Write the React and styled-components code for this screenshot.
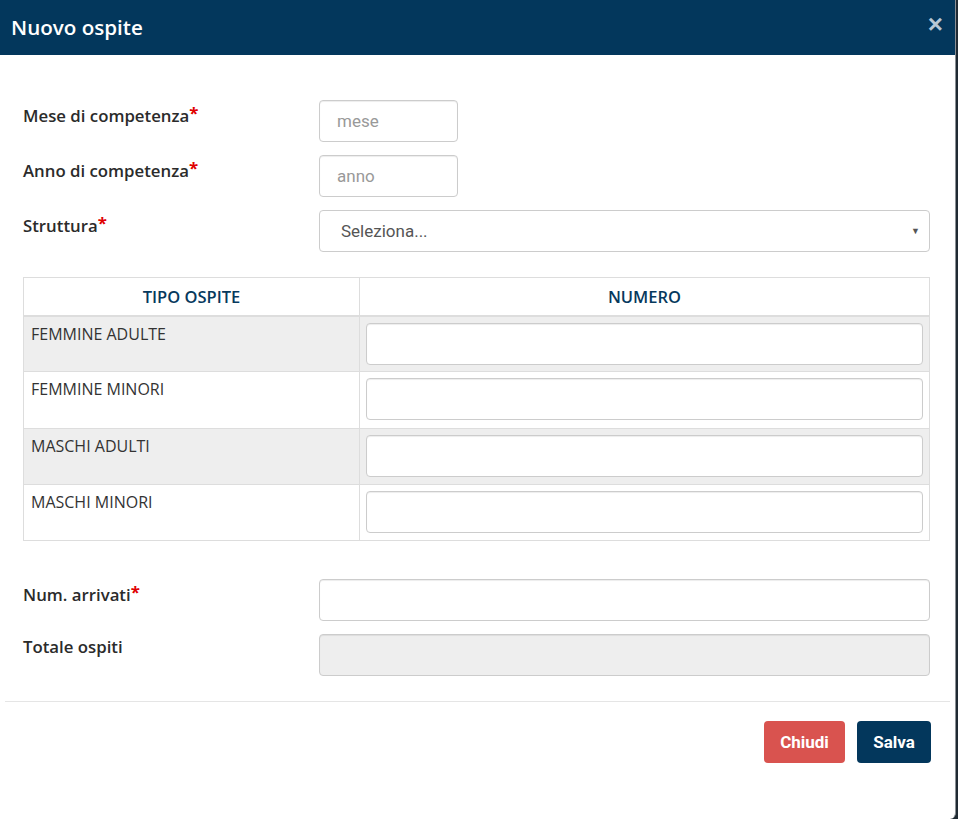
import React from 'react'
import styled, { createGlobalStyle } from 'styled-components'

const GlobalStyle = createGlobalStyle`
  html, body {
    margin: 0;
    padding: 0;
    background: #1f2a33;
  }
  * {
    box-sizing: border-box;
  }
`

const guestTypes = ['FEMMINE ADULTE', 'FEMMINE MINORI', 'MASCHI ADULTI', 'MASCHI MINORI']

const App = () => {
  return (
    <>
      <GlobalStyle />
      <Modal>
        <Header>
          <Title>Nuovo ospite</Title>
          <CloseButton aria-label="chiudi">×</CloseButton>
        </Header>
        <Body>
          <FormRow>
            <Label>Mese di competenza<Star>*</Star></Label>
            <Input $small placeholder="mese" />
          </FormRow>
          <FormRow>
            <Label>Anno di competenza<Star>*</Star></Label>
            <Input $small placeholder="anno" />
          </FormRow>
          <FormRow>
            <Label>Struttura<Star>*</Star></Label>
            <SelectBox>
              <span>Seleziona...</span>
              <Caret>▼</Caret>
            </SelectBox>
          </FormRow>

          <Table>
            <thead>
              <tr>
                <Th $left>TIPO OSPITE</Th>
                <Th>NUMERO</Th>
              </tr>
            </thead>
            <tbody>
              {guestTypes.map((t, i) => (
                <Tr key={t} $striped={i % 2 === 0}>
                  <TdLabel>{t}</TdLabel>
                  <TdInput>
                    <Input />
                  </TdInput>
                </Tr>
              ))}
            </tbody>
          </Table>

          <FormRow>
            <Label>Num. arrivati<Star>*</Star></Label>
            <Input />
          </FormRow>
          <FormRow>
            <Label>Totale ospiti</Label>
            <Input disabled />
          </FormRow>
        </Body>
        <Footer>
          <Button $variant="danger">Chiudi</Button>
          <Button>Salva</Button>
        </Footer>
      </Modal>
    </>
  )
}

const Modal = styled.div`
  width: 956px;
  min-height: 100vh;
  background: #fff;
  border-right: 1px solid #8a8f94;
  border-bottom-right-radius: 6px;
  display: flex;
  flex-direction: column;
`

const Header = styled.div`
  height: 55px;
  background: #03375c;
  display: flex;
  align-items: center;
  justify-content: space-between;
  padding: 0 12px 2px 11px;
`

const Title = styled.h4`
  margin: 0;
  color: #fff;
  font-family: 'Open Sans', sans-serif;
  font-weight: 600;
  font-size: 20.6px;
`

const CloseButton = styled.button`
  border: 0;
  background: transparent;
  padding: 0;
  margin-top: -5px;
  color: #b7c7d5;
  font-family: 'Liberation Sans', Arial, sans-serif;
  font-weight: 700;
  font-size: 26px;
  line-height: 1;
  cursor: pointer;
`

const Body = styled.div`
  margin: 0 5px;
  padding: 45px 20px 25px 18px;
  display: flex;
  flex-direction: column;
  gap: 13px;
  border-bottom: 1px solid #e5e5e5;
`

const FormRow = styled.div`
  display: flex;
  align-items: flex-start;
`

const Label = styled.label`
  width: 296px;
  flex-shrink: 0;
  padding-top: 2px;
  font-family: 'Open Sans', sans-serif;
  font-weight: 600;
  font-size: 16.8px;
  line-height: 22px;
  color: #2b2b2b;
`

const Star = styled.span`
  color: #e00000;
  font-weight: 700;
  vertical-align: 3px;
`

const Input = styled.input`
  width: ${p => (p.$small ? '139px' : '100%')};
  height: 42px;
  border: 1px solid #ccc;
  border-radius: 4px;
  padding: 0 17px;
  font-family: Roboto, sans-serif;
  font-size: 17px;
  color: #555;
  background: ${p => (p.disabled ? '#eee' : '#fff')};
  box-shadow: inset 0 1px 1px rgba(0, 0, 0, 0.075);
  outline: none;
  &::placeholder {
    color: #999;
  }
`

const SelectBox = styled.div`
  flex: 1;
  height: 42px;
  border: 1px solid #ccc;
  border-radius: 4px;
  padding: 0 9px 0 21px;
  display: flex;
  align-items: center;
  justify-content: space-between;
  font-family: Roboto, sans-serif;
  font-size: 17px;
  color: #555;
  background: #fff;
`

const Caret = styled.span`
  font-size: 9px;
  color: #555;
`

const Table = styled.table`
  width: 907px;
  border-collapse: collapse;
  margin: 12px 0 25px;
  font-family: 'Open Sans', sans-serif;
`

const Th = styled.th`
  width: ${p => (p.$left ? '336px' : 'auto')};
  height: 38px;
  border: 1px solid #ddd;
  border-bottom: 2px solid #ddd;
  color: #07395d;
  font-size: 16.5px;
  font-weight: 600;
  text-align: center;
  padding: 0 8px;
`

const Tr = styled.tr`
  background: ${p => (p.$striped ? '#eee' : '#fff')};
`

const TdLabel = styled.td`
  border: 1px solid #ddd;
  vertical-align: top;
  padding: 6px 7px;
  height: 56.3px;
  font-size: 16px;
  line-height: 22px;
  color: #333;
`

const TdInput = styled.td`
  border: 1px solid #ddd;
  padding: 6px;
  vertical-align: top;
`

const Footer = styled.div`
  display: flex;
  justify-content: flex-end;
  gap: 12px;
  padding: 19px 24px 20px;
`

const Button = styled.button`
  width: ${p => (p.$variant === 'danger' ? '81px' : '74px')};
  height: 42px;
  border: 0;
  border-radius: 4px;
  padding: 0;
  background: ${p => (p.$variant === 'danger' ? '#d9534f' : '#03375c')};
  color: #fff;
  font-family: Roboto, sans-serif;
  font-weight: 700;
  font-size: 17px;
  cursor: pointer;
`

export default App
